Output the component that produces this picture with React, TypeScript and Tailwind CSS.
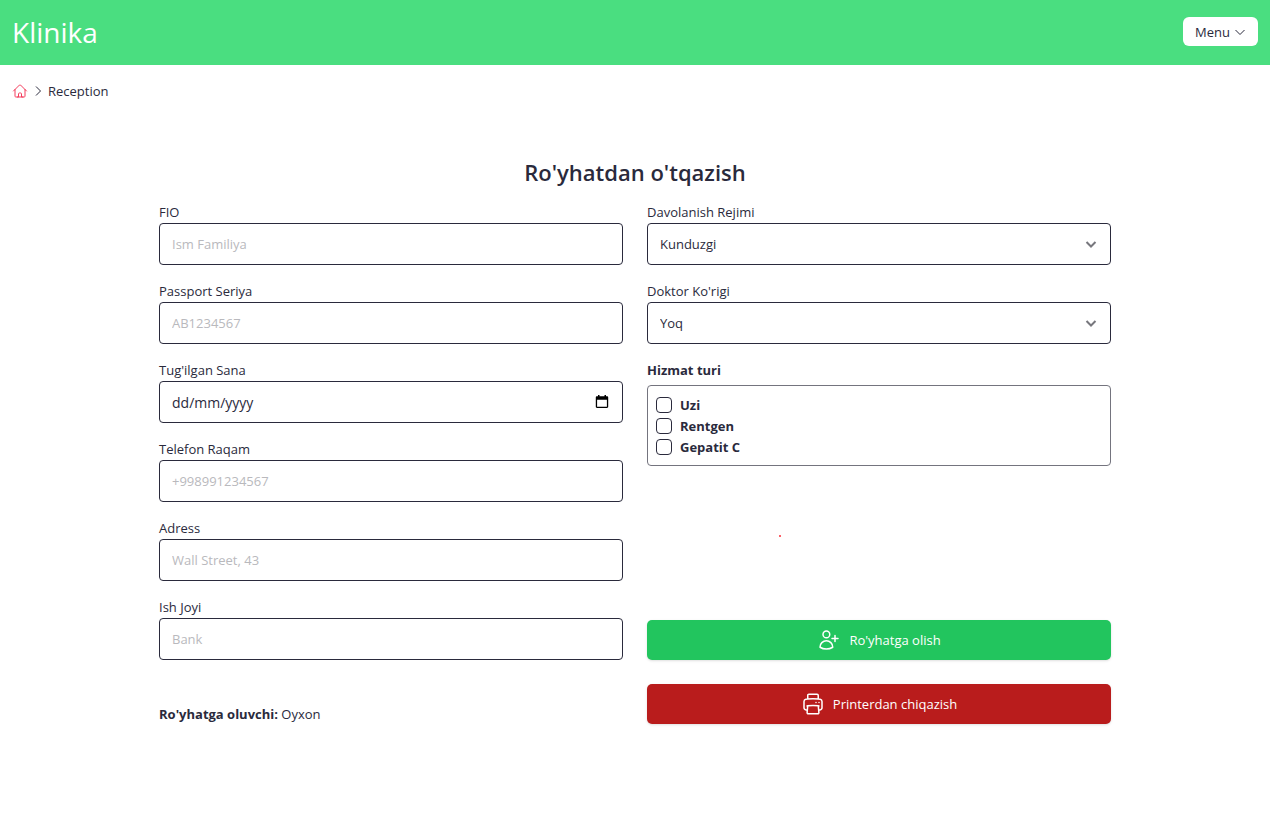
import React, { useState } from "react";
import {
  HiOutlineHome,
  HiOutlinePrinter,
  HiOutlineUserPlus,
} from "react-icons/hi2";

const controlClass =
  "block h-[42px] w-full rounded border border-[#2a2a3c] bg-white px-3 text-[#2a2a3c] outline-none focus:ring-2 focus:ring-green-300";

function Chevron({ className }: { className: string }) {
  return (
    <svg viewBox="0 0 12 12" fill="none" stroke="currentColor" className={className} aria-hidden="true">
      <path d="M1.5 4 6 8.5 10.5 4" />
    </svg>
  );
}

function Field({ id, label, children }: { id: string; label: string; children: React.ReactNode }) {
  return (
    <div>
      <label htmlFor={id} className="block leading-[21px]">
        {label}
      </label>
      {children}
    </div>
  );
}

function TextField({ id, label, placeholder }: { id: string; label: string; placeholder: string }) {
  return (
    <Field id={id} label={label}>
      <input id={id} type="text" placeholder={placeholder} className={`${controlClass} placeholder:text-[#b9b9bd]`} />
    </Field>
  );
}

function DateField({ id, label }: { id: string; label: string }) {
  return (
    <Field id={id} label={label}>
      <div className="relative">
        <input
          id={id}
          type="text"
          inputMode="numeric"
          placeholder="dd/mm/yyyy"
          className={`${controlClass} text-sm placeholder:text-[#2a2a3c]`}
        />
        <button type="button" aria-label="Kalendar" className="absolute inset-y-0 right-3.5 flex items-center text-black">
          <svg viewBox="0 0 14 14" className="size-3.5" fill="currentColor" aria-hidden="true">
            <path
              fillRule="evenodd"
              d="M3 0h1.5v1.2h5V0H11v1.2h1c.7 0 1.2.5 1.2 1.2v9.4c0 .7-.5 1.2-1.2 1.2H2c-.7 0-1.2-.5-1.2-1.2V2.4c0-.7.5-1.2 1.2-1.2h1V0Zm-.9 4.8v6.9h9.8V4.8H2.1Z"
            />
          </svg>
        </button>
      </div>
    </Field>
  );
}

function SelectField({ id, label, options }: { id: string; label: string; options: string[] }) {
  return (
    <Field id={id} label={label}>
      <div className="relative">
        <select id={id} className={`${controlClass} appearance-none pr-9`}>
          {options.map((option) => (
            <option key={option}>{option}</option>
          ))}
        </select>
        <Chevron className="pointer-events-none absolute inset-y-0 right-3.5 my-auto size-3 stroke-2 text-[#77777d]" />
      </div>
    </Field>
  );
}

const services = ["Uzi", "Rentgen", "Gepatit C"];

export default function App() {
  const [selected, setSelected] = useState<string[]>([]);

  const toggle = (name: string) =>
    setSelected((current) => (current.includes(name) ? current.filter((item) => item !== name) : [...current, name]));

  return (
    <div className="min-h-screen bg-white font-['Open_Sans','Noto_Sans',sans-serif] text-[13px] leading-5 text-[#2a2a3c]">
      <header className="flex h-[65px] items-center justify-between bg-[#4ade80] px-3 pb-0.5">
        <a href="#" className="text-[28px] leading-9 text-white">
          Klinika
        </a>
        <button type="button" className="flex h-[29px] items-center gap-1 rounded-md bg-white px-3">
          Menu
          <Chevron className="size-3" />
        </button>
      </header>

      <nav aria-label="Breadcrumb" className="flex items-center gap-1 px-3 py-4">
        <a href="#" aria-label="Bosh sahifa" className="text-[#f43f5e]">
          <HiOutlineHome className="size-4" />
        </a>
        <Chevron className="size-3 -rotate-90" />
        <span>Reception</span>
      </nav>

      <main className="mx-auto max-w-[976px] px-3 pt-[39px] pb-8">
        <h1 className="mb-3.5 text-center text-[22px] leading-8 font-semibold">Ro'yhatdan o'tqazish</h1>
        <form className="grid grid-cols-1 gap-6 md:grid-cols-2" onSubmit={(event) => event.preventDefault()}>
          <div className="flex flex-col gap-4">
            <TextField id="fio" label="FIO" placeholder="Ism Familiya" />
            <TextField id="passport" label="Passport Seriya" placeholder="AB1234567" />
            <DateField id="birth" label="Tug'ilgan Sana" />
            <TextField id="phone" label="Telefon Raqam" placeholder="+998991234567" />
            <TextField id="address" label="Adress" placeholder="Wall Street, 43" />
            <TextField id="work" label="Ish Joyi" placeholder="Bank" />
            <p className="mt-7">
              <b>Ro'yhatga oluvchi:</b> Oyxon
            </p>
          </div>

          <div className="flex flex-col gap-4">
            <SelectField id="mode" label="Davolanish Rejimi" options={["Kunduzgi", "Statsionar"]} />
            <SelectField id="doctor" label="Doktor Ko'rigi" options={["Yoq", "Bor"]} />
            <fieldset className="font-bold">
              <legend className="mb-1 leading-[21px]">Hizmat turi</legend>
              <div className="rounded border border-[#74747e] p-2">
                {services.map((name) => (
                  <label key={name} className="flex h-[21px] items-center gap-2">
                    <input
                      type="checkbox"
                      checked={selected.includes(name)}
                      onChange={() => toggle(name)}
                      className="size-4 appearance-none rounded border border-[#2a2a3c] checked:bg-[#22c55e]"
                    />
                    {name}
                  </label>
                ))}
              </div>
            </fieldset>
            <div className="flex-1 pt-[53px] pl-[132px]">
              <span className="block size-0.5 rounded-full bg-red-500" />
            </div>
            <div className="flex flex-col gap-6 font-medium text-white">
              <button type="submit" className="flex h-10 items-center justify-center gap-2 rounded-[5px] bg-[#22c55e] shadow-sm">
                <HiOutlineUserPlus className="size-6" />
                Ro'yhatga olish
              </button>
              <button type="button" className="flex h-10 items-center justify-center gap-2 rounded-[5px] bg-[#b91c1c] shadow-sm">
                <HiOutlinePrinter className="size-6" />
                Printerdan chiqazish
              </button>
            </div>
          </div>
        </form>
      </main>
    </div>
  );
}
